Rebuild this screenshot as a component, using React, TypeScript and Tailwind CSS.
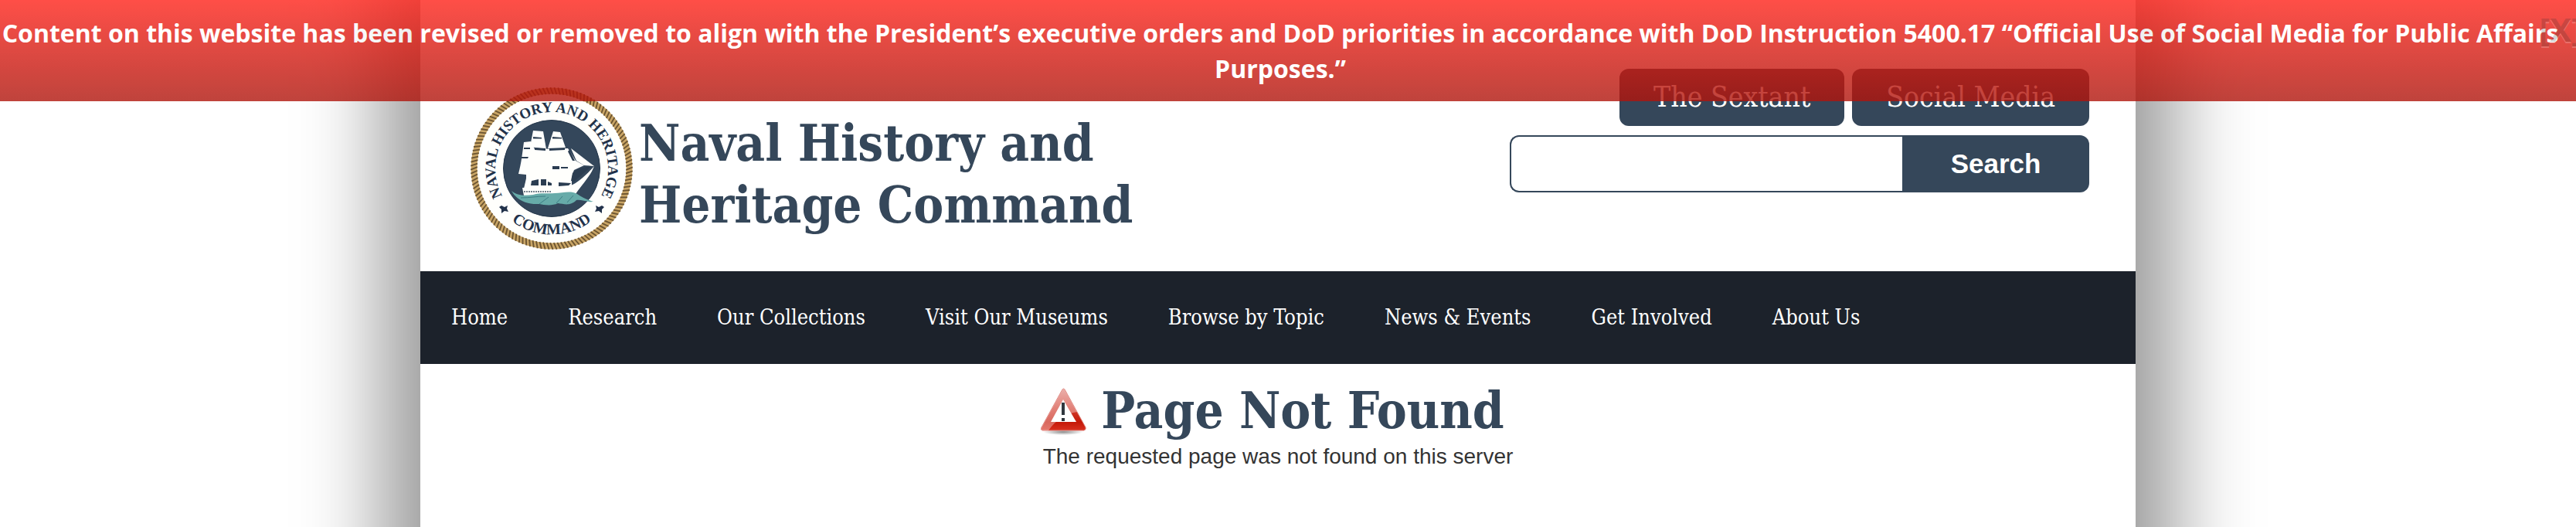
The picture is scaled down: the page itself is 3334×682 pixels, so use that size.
const navItems = [
    "Home",
    "Research",
    "Our Collections",
    "Visit Our Museums",
    "Browse by Topic",
    "News & Events",
    "Get Involved",
    "About Us",
]

const slab = "font-['Roboto_Slab','DejaVu_Serif_Condensed','DejaVu_Serif',serif]"

function Seal() {
    return (
        <svg viewBox="-105 -105 210 210" className="w-[210px] h-[210px] shrink-0" role="img" aria-label="Naval History and Heritage Command seal">
            <defs>
                <path id="seal-top" d="M -59.8 41.9 A 73 73 0 1 1 59.8 41.9" />
                <path id="seal-bottom" d="M -74 42.7 A 85.5 85.5 0 0 0 74 42.7" />
            </defs>
            {/* Rope border */}
            <circle r="100.5" fill="#fffffc" stroke="#c9a566" strokeWidth="8" />
            {[...Array(132)].map((_, i) => (
                <path
                    key={i}
                    d="M -1.6 -104.8 L 1.8 -96.2"
                    stroke="#6b5431"
                    strokeWidth="1.8"
                    transform={`rotate(${(i * 360) / 132})`}
                />
            ))}
            <g fill="#22324a" fontFamily="'Liberation Serif', serif" fontWeight="700" textAnchor="middle">
                <text fontSize="19">
                    <textPath href="#seal-top" startOffset="50%">NAVAL HISTORY AND HERITAGE</textPath>
                </text>
                <text fontSize="20">
                    <textPath href="#seal-bottom" startOffset="50%">COMMAND</textPath>
                </text>
            </g>
            {/* Stars */}
            <g fill="#22324a">
                <path d="M -65 48 L -61 50 L -57 48 L -58 52 L -56 56 L -61 55 L -65 58 L -65 53 L -68 50 Z" />
                <path d="M 65 48 L 61 50 L 57 48 L 58 52 L 56 56 L 61 55 L 65 58 L 65 53 L 68 50 Z" />
            </g>
            <circle r="62.5" fill="#34475b" stroke="#26384c" strokeWidth="1" />
            {/* Ship */}
            <g fill="#fffffc">
                <path d="M -24 -49 L -11 -48 L -7 -25 L -28 -28 Z" />
                <path d="M 2 -48 L 11 -47 L 18 -27 L -5 -26 Z" />
                <path d="M -36 -34 L -27 -35 L -22 -25 L 21 -26 L 31 -10 L 42 -4 L 29 2 C 26 9 27 14 22 20 L -33 16 L -33 8 L -43 7 C -39 -8 -38 -20 -36 -34 Z" />
                <path d="M 25 -26 L 55 -3 L 42 -4 L 32 -10 Z" />
                <path d="M -38 25 L 24 22 C 34 19 46 7 55 -3 C 50 11 36 24 30 35 L -36 35 Z" />
                <path d="M -33 13 L 26 13 L 26 25 L -36 26 Z" />
            </g>
            <g fill="#2b3d51">
                <path d="M -26 16 l 9 -2 v 8 h -10z M -14 14 l 7 0 v 8 h -7z M -5 17 l 5 2 v 3 h -5z M 9 18 l 16 1 -3 3 -13 1z" />
                <path d="M -22 -27 l 14 1 v 3 l -14 -1z M -3 -26 l 20 0 v 2 l -20 1z M -39 -15 l 9 0 -1 2 -8 0z M -36 -27 l 8 0 0 2 -8 0z" />
                <path d="M 1 -3 h 9 v 4 h -9z M 12 -2 h 9 v 2 h -9z M 23 -24 l 7 14 -3 0 -6 -12z M 27 6 C 33 -1 41 -1 52 -3 L 29 17 L 25 16 Z" />
                <path d="M -24 -41 l 11 1 v 1.500 h -11z M 1 -41 l 12 1 v 1.500 h -12z" />
            </g>
            <path d="M -36 30 H 0" stroke="#4a5968" strokeWidth="1.500" strokeDasharray="2 1" />
            <path
                d="M -52 29 C -44 36 -34 35 -24 34 C -14 31 -5 33 4 32 C 14 32 24 28 33 33 C 40 38 48 41 54 43 C 46 44 38 40 32 41 C 24 49 16 46 8 45 C 0 49 -10 47 -16 46 C -30 47 -45 42 -52 29 Z"
                fill="#67aba9"
            />
            <path d="M -40 38 C -28 38 -20 36 -8 36 M -16 46 L -4 37 M 6 45 L 14 36 M 20 44 L 28 35" fill="none" stroke="#3e7f85" strokeWidth="1" />
        </svg>
    )
}

function WarningIcon() {
    return (
        <svg viewBox="0 0 64 64" className="w-16 h-16 shrink-0" aria-hidden="true">
            <defs>
                <linearGradient id="warn-red" x1="0" y1="0" x2="0" y2="1">
                    <stop offset="0" stopColor="#e0857d" />
                    <stop offset="0.5" stopColor="#d23a2c" />
                    <stop offset="0.8" stopColor="#c41808" />
                    <stop offset="1" stopColor="#d8301f" />
                </linearGradient>
                <radialGradient id="warn-shadow">
                    <stop offset="0" stopColor="#000" stopOpacity="0.45" />
                    <stop offset="1" stopColor="#000" stopOpacity="0" />
                </radialGradient>
            </defs>
            <ellipse cx="31" cy="60" rx="26" ry="4" fill="url(#warn-shadow)" />
            <path d="M 30 5 Q 31 3 33 5 L 60 54 Q 61 57 58 58 H 4 Q 1 57 3 54 Z" fill="url(#warn-red)" stroke="#dd7a72" strokeWidth="1" />
            <path d="M 30 5 Q 31 3 33 5 L 49 34 Q 26 38 12 58 H 4 Q 1 57 3 54 Z" fill="#fff" opacity="0.35" />
            <path d="M 31 18 L 48 47 H 15 Z" fill="#fff" />
            <path d="M 31 22 V 38" stroke="#30383f" strokeWidth="4" />
            <path d="M 31 42 V 46" stroke="#30383f" strokeWidth="4" />
        </svg>
    )
}

function Banner() {
    return (
        <div className="absolute inset-x-0 top-0 z-20 opacity-80 bg-linear-to-b from-[#ff231a] to-[#b0150c] pt-5 pb-[19px] pr-5 overflow-hidden">
            <p className="text-center text-white font-bold text-[32px] leading-[46px] font-['Open_Sans',sans-serif]">
                Content on this website has been revised or removed to align with the President’s executive orders and DoD priorities in accordance with DoD Instruction 5400.17 “Official Use of Social Media for Public Affairs Purposes.”
            </p>
            <button
                type="button"
                className="absolute top-2 -right-2 text-[42px] leading-[60px] font-bold text-black opacity-20 [text-shadow:0_2px_0_#fff] font-['Open_Sans',sans-serif]"
            >
                [X]
            </button>
        </div>
    )
}

export default function App() {
    return (
        <div className="relative h-screen overflow-hidden bg-white pr-[26px]">
            <Banner />

            <div className="mx-auto w-[94%] max-w-[2220px] bg-white pb-80 shadow-[0_0_100px_50px_rgba(0,0,0,0.4)]">
                <header className="flex items-start justify-between pl-[65px] pr-[60px] h-[351px]">
                    <a href="#home" className="flex items-start pt-[113px]">
                        <Seal />
                        <h1 className={`pt-8 pl-2 text-[65px] leading-[80px] font-bold text-[#35475a] ${slab}`}>
                            Naval History and
                            <br />
                            Heritage Command
                        </h1>
                    </a>

                    <div className="pt-[89px] w-[750px]">
                        <div className="flex justify-end gap-[10px]">
                            <a href="#sextant" className={`h-[74px] px-11 rounded-xl bg-[#35475a] text-white text-[37px] leading-[74px] ${slab}`}>
                                The Sextant
                            </a>
                            <a href="#social" className={`h-[74px] px-11 rounded-xl bg-[#35475a] text-white text-[37px] leading-[74px] ${slab}`}>
                                Social Media
                            </a>
                        </div>
                        <form className="mt-3 flex h-[74px]" onSubmit={(e) => e.preventDefault()}>
                            <input
                                type="text"
                                aria-label="Search"
                                className="min-w-0 flex-1 rounded-l-xl border-2 border-r-0 border-[#35475a] bg-white px-4 text-[32px] outline-none"
                            />
                            <button
                                type="submit"
                                className="w-[242px] rounded-r-xl bg-[#35475a] text-white font-bold text-[35px] font-['Liberation_Sans',sans-serif]"
                            >
                                Search
                            </button>
                        </form>
                    </div>
                </header>

                <nav className="flex h-[120px] items-center bg-[#1c222b] px-px">
                    {navItems.map((item) => (
                        <a key={item} href="#" className={`px-[39px] text-[27px] text-white whitespace-nowrap ${slab}`}>
                            {item}
                        </a>
                    ))}
                </nav>

                <main className="flex flex-col items-center pt-5">
                    <div className="flex items-center gap-4 pr-4">
                        <WarningIcon />
                        <h2 className={`text-[65px] leading-[80px] font-bold text-[#35475a] ${slab}`}>Page Not Found</h2>
                    </div>
                    <p className="text-[28px] leading-10 text-[#333] font-['Liberation_Sans',sans-serif]">
                        The requested page was not found on this server
                    </p>
                </main>
            </div>
        </div>
    )
}
